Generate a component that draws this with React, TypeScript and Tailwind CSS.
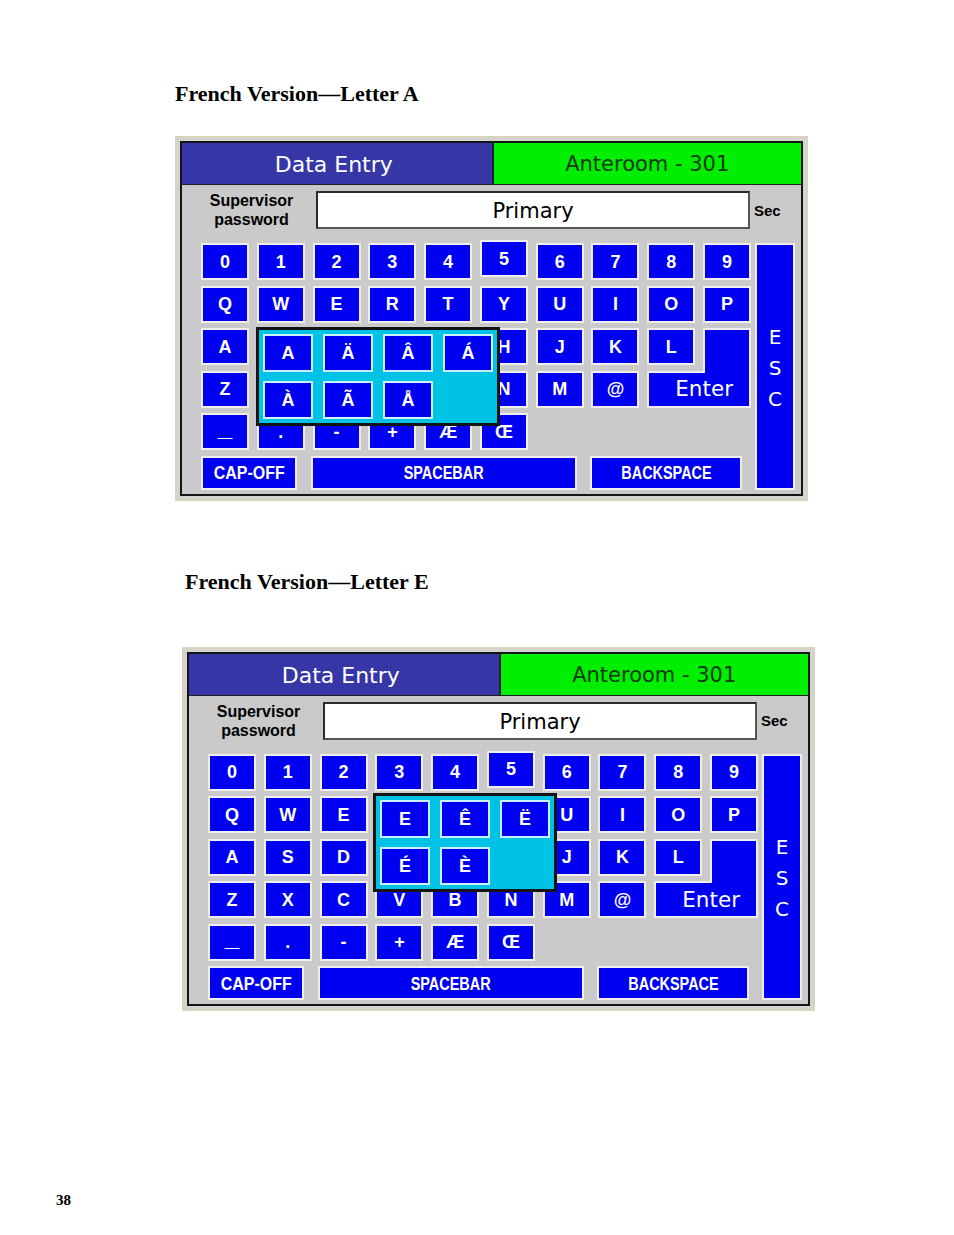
import React from 'react';

const keyBase =
    "flex items-center justify-center bg-[#0000f0] border-2 border-[#f2eeee] text-white font-bold leading-none font-['Liberation_Sans',Arial,sans-serif]";

const rows: string[][] = [
    ['0', '1', '2', '3', '4', '5', '6', '7', '8', '9'],
    ['Q', 'W', 'E', 'R', 'T', 'Y', 'U', 'I', 'O', 'P'],
    ['A', 'S', 'D', 'F', 'G', 'H', 'J', 'K', 'L'],
    ['Z', 'X', 'C', 'V', 'B', 'N', 'M', '@'],
    ['_', '.', '-', '+', 'Æ', 'Œ'],
];

const Key: React.FC<{ label: string }> = ({ label }) => (
    <div
        className={`${keyBase} w-[48px] h-[37px] ${label === '_' ? 'text-[26px] pb-[10px]' : 'text-[18px]'} ${
            label === '5' ? '-translate-y-[3px]' : ''
        }`}
    >
        {label}
    </div>
);

const AccentPopup: React.FC<{ letter: 'A' | 'E' }> = ({ letter }) => {
    const chars = letter === 'A' ? ['A', 'Ä', 'Â', 'Á', 'À', 'Ã', 'Å'] : ['E', 'Ê', 'Ë', 'É', 'È'];
    return (
        <div
            className={`absolute z-20 border-[3px] border-[#141414] bg-[#00c2e4] p-[4px] grid gap-x-[10px] gap-y-[9px] ${
                letter === 'A' ? 'left-[55px] top-[84px] grid-cols-4' : 'left-[165px] top-[39px] grid-cols-3'
            }`}
        >
            {chars.map(c => (
                <div
                    key={c}
                    className="w-[50px] h-[38px] flex items-center justify-center bg-[#0000f0] border-2 border-[#c8f2fc] text-white font-bold text-[18px] leading-none font-['Liberation_Sans',Arial,sans-serif]"
                >
                    {c}
                </div>
            ))}
        </div>
    );
};

const Panel: React.FC<{ letter: 'A' | 'E' }> = ({ letter }) => (
    <div className="w-[633px] border-2 border-[#d8d3bd] bg-[#d3d3cf] p-[3px]">
        <div className="border-2 border-[#151515] bg-[#cacaca] font-['DejaVu_Sans',sans-serif]">
            {/* title bar */}
            <div className="grid grid-cols-2 h-[42px] border-b border-[#202020]">
                <div className="flex items-center justify-center bg-[#3636a6] text-white text-[22px] pr-[6px] pt-[2px]">
                    Data Entry
                </div>
                <div className="flex items-center justify-center bg-[#00ee00] text-[#0e3a0e] text-[21px] border-l-2 border-[#1c1c3c] pt-[3px]">
                    Anteroom - 301
                </div>
            </div>

            {/* password row */}
            <div className="flex items-start h-[53px] pl-[19px] pt-[6px]">
                <div className="w-[101px] h-[38px] flex flex-col items-center justify-center text-black font-bold text-[16px] leading-[19px] font-['Liberation_Sans',Arial,sans-serif]">
                    <span>Supervisor</span>
                    <span>password</span>
                </div>
                <div className="ml-[14px] w-[434px] h-[38px] pt-[4px] bg-white border-2 border-t-[#2a2a2a] border-l-[#2a2a2a] border-r-[#555] border-b-[#555] flex items-center justify-center text-black text-[21px]">
                    Primary
                </div>
                <div className="ml-[4px] h-[38px] pt-[2px] flex items-center text-black font-bold text-[15px] font-['Liberation_Sans',Arial,sans-serif]">
                    Sec
                </div>
            </div>

            {/* keyboard */}
            <div className="flex gap-[4px] pl-[19px] mt-[5px] pb-[4px]">
                <div className="relative flex flex-col gap-[5.5px] w-[550px]">
                    {rows.map((row, i) => (
                        <div key={i} className="flex gap-[7.8px] h-[37px]">
                            {row.map(k => (
                                <Key key={k} label={k} />
                            ))}
                            {i === 2 && (
                                <div className="relative z-10 w-[48px] h-[44.5px] self-start bg-[#0000f0] border-2 border-b-0 border-[#f2eeee]" />
                            )}
                            {i === 3 && (
                                <div className="w-[103.8px] h-[37px] flex items-center justify-center bg-[#0000f0] border-2 border-[#f2eeee] text-white text-[21.5px] leading-none pl-[10px]">
                                    Enter
                                </div>
                            )}
                        </div>
                    ))}
                    <div className="flex h-[34px]">
                        <div className={`${keyBase} w-[96px] h-[34px] text-[19px]`}>
                            <span className="inline-block scale-x-[0.84]">CAP-OFF</span>
                        </div>
                        <div className={`${keyBase} ml-[14px] w-[266px] h-[34px] text-[19px]`}>
                            <span className="inline-block scale-x-[0.76]">SPACEBAR</span>
                        </div>
                        <div className={`${keyBase} ml-[13px] w-[152px] h-[34px] text-[19px]`}>
                            <span className="inline-block scale-x-[0.76]">BACKSPACE</span>
                        </div>
                    </div>
                    <AccentPopup letter={letter} />
                </div>
                <div className="w-[40px] bg-[#0000f0] border-2 border-[#f2eeee] flex flex-col items-center justify-center pt-[4px] text-white text-[20px] leading-[31px]">
                    <span>E</span>
                    <span>S</span>
                    <span>C</span>
                </div>
            </div>
        </div>
    </div>
);

export default function App() {
    return (
        <div className="w-[954px] h-[1235px] bg-white flex flex-col items-start text-black">
            <h2 className="ml-[175px] mt-[82px] leading-[24px] text-[22px] font-bold font-['Liberation_Serif','Times_New_Roman',serif]">
                French Version—Letter A
            </h2>
            <div className="ml-[175px] mt-[30px]">
                <Panel letter="A" />
            </div>
            <h2 className="ml-[185px] mt-[69px] leading-[24px] text-[22px] font-bold font-['Liberation_Serif','Times_New_Roman',serif]">
                French Version—Letter E
            </h2>
            <div className="ml-[182px] mt-[53px]">
                <Panel letter="E" />
            </div>
            <div className="ml-[56px] mt-[180px] leading-[18px] text-[15px] font-bold font-['Liberation_Serif','Times_New_Roman',serif]">
                38
            </div>
        </div>
    );
}
